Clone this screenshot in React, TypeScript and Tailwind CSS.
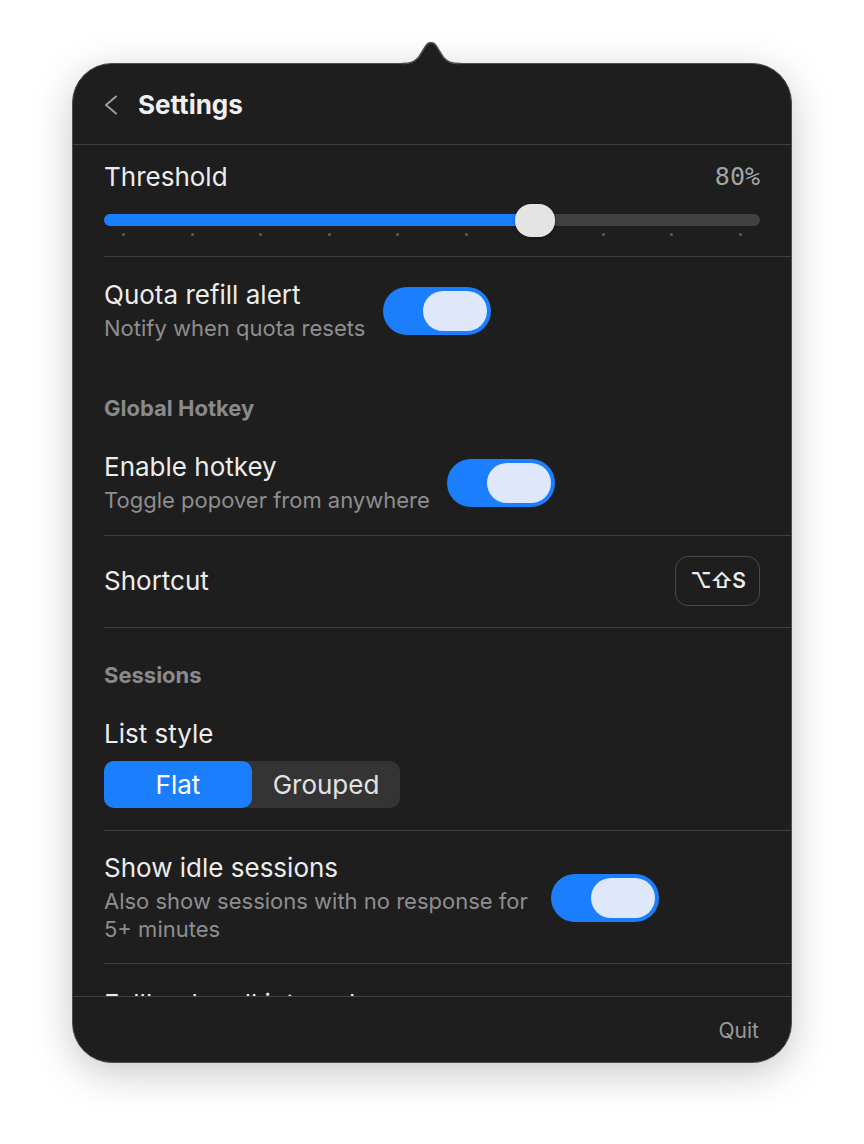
const ticks = Array.from({ length: 10 });

const Toggle = () => (
  <div className="w-[108px] h-[48px] shrink-0 rounded-full bg-[#1b7ffd] p-[4px] flex justify-end">
    <div className="w-[64px] h-[40px] rounded-full bg-[#dfe8fb]" />
  </div>
);

const Divider = () => <div className="h-px bg-[#414141]" />;

const ToggleRow = ({
  title,
  subtitle,
  gap = "gap-[18px]",
}: {
  title: string;
  subtitle: React.ReactNode;
  gap?: string;
}) => (
  <div className={`flex items-center ${gap} pr-[31px]`}>
    <div className="flex flex-col">
      <span className="text-[26px] leading-[30px] text-[#ececec] whitespace-nowrap">{title}</span>
      <span className="mt-1 text-[22px] leading-[28px] text-[#8e8e8e] whitespace-nowrap">{subtitle}</span>
    </div>
    <Toggle />
  </div>
);

const SectionHeader = ({ children }: { children: string }) => (
  <div className="text-[22px] leading-[28px] font-bold text-[#8a8a8a]">{children}</div>
);

export default function App() {
  return (
    <div className="min-h-[1144px] bg-white pt-[63px] font-['Inter',sans-serif]">
      <div className="relative mx-auto w-[720px] h-[1000px] rounded-[40px] border-[1.5px] border-[#4e4e4e] bg-[#1e1e1e] shadow-[0_10px_40px_rgba(0,0,0,0.22)] flex flex-col">
        {/* popover arrow */}
        <svg
          className="absolute top-[-22.5px] left-[328.5px]"
          width="58"
          height="27"
          viewBox="0 0 58 27"
        >
          <path
            d="M0 21.5 C9 21.5 12 20 16.5 15.5 L24 3.5 C26 0.8 27.5 0.5 29 0.5 C30.5 0.5 32 0.8 34 3.5 L41.5 15.5 C46 20 49 21.5 58 21.5 L58 27 L0 27 Z"
            fill="#1e1e1e"
          />
          <path
            d="M0 21.5 C9 21.5 12 20 16.5 15.5 L24 3.5 C26 0.8 27.5 0.5 29 0.5 C30.5 0.5 32 0.8 34 3.5 L41.5 15.5 C46 20 49 21.5 58 21.5"
            fill="none"
            stroke="#4e4e4e"
            strokeWidth="1.5"
          />
        </svg>

        {/* header */}
        <div className="h-[81px] shrink-0 border-b border-[#414141] flex items-center gap-[20px] pl-[31px]">
          <svg width="14" height="20" viewBox="0 0 14 20" className="mt-px">
            <path
              d="M12 1.5 L2 10 L12 18.5"
              fill="none"
              stroke="#9c9c9c"
              strokeWidth="2"
              strokeLinecap="round"
              strokeLinejoin="round"
            />
          </svg>
          <span className="text-[26px] font-bold text-[#f0f0f0]">Settings</span>
        </div>

        {/* scrolling content */}
        <div className="flex-1 overflow-hidden pl-[31px]">
          <div className="pt-[17px] pb-[16px] pr-[31px]">
            <div className="flex items-center justify-between">
              <span className="text-[26px] leading-[30px] text-[#ececec]">Threshold</span>
              <span className="font-['DejaVu_Sans_Mono',monospace] text-[25px] leading-[30px] text-[#a3a3a3]">
                80%
              </span>
            </div>
            <div className="relative mt-[4px] h-[44px]">
              <div className="absolute top-[18px] left-0 right-0 h-[12px] rounded-full bg-[#414141]" />
              <div className="absolute top-[18px] left-0 w-[431px] h-[12px] rounded-full bg-[#1b7ffd]" />
              <div className="absolute top-[37px] left-0 right-0 flex justify-between px-[18px]">
                {ticks.map((_, i) => (
                  <div key={i} className="w-[3px] h-[3px] rounded-full bg-[#5e5e5e]" />
                ))}
              </div>
              <div className="absolute top-[8px] left-[411px] w-[40px] h-[33px] rounded-[16px] bg-[#e4e4e4] shadow-[0_1px_3px_rgba(0,0,0,0.4)]" />
            </div>
          </div>
          <Divider />

          <div className="pt-[23px]">
            <ToggleRow title="Quota refill alert" subtitle="Notify when quota resets" />
          </div>

          <div className="mt-[52px]">
            <SectionHeader>Global Hotkey</SectionHeader>
          </div>
          <div className="mt-[30px] pb-[21px]">
            <ToggleRow title="Enable hotkey" subtitle="Toggle popover from anywhere" gap="gap-[17px]" />
          </div>
          <Divider />

          <div className="pt-[20px] pb-[21px] pr-[31px] flex items-center justify-between">
            <span className="text-[26px] leading-[30px] text-[#ececec]">Shortcut</span>
            <div className="w-[85px] h-[50px] rounded-[13px] border-[1.5px] border-[#4a4a4a] flex items-center justify-center">
              <span className="font-['Inter','DejaVu_Sans',sans-serif] text-[21px] font-semibold tracking-[-1px] text-[#ececec]">
                ⌥⇧S
              </span>
            </div>
          </div>
          <Divider />

          <div className="pt-[33px]">
            <SectionHeader>Sessions</SectionHeader>
          </div>
          <div className="mt-[30px] text-[26px] leading-[30px] text-[#ececec]">List style</div>
          <div className="mt-[12px] pb-[22px]">
            <div className="w-[296px] h-[47px] rounded-[10px] bg-[#343434] grid grid-cols-2">
              <div className="rounded-[10px] bg-[#1b7ffd] flex items-center justify-center text-[26px] text-white">
                Flat
              </div>
              <div className="flex items-center justify-center text-[26px] text-[#e2e2e2]">Grouped</div>
            </div>
          </div>
          <Divider />

          <div className="pt-[22px] pb-[20px]">
            <ToggleRow
              title="Show idle sessions"
              gap="gap-[23px]"
              subtitle={
                <>
                  Also show sessions with no response for
                  <br />
                  5+ minutes
                </>
              }
            />
          </div>
          <Divider />

          <div className="pt-[25px] text-[26px] leading-[30px] text-[#ececec]">Fallback poll interval</div>
        </div>

        {/* footer */}
        <div className="h-[66px] shrink-0 border-t border-[#414141] flex items-center justify-end pr-[32px] pt-[3px]">
          <span className="text-[21px] text-[#9a9a9a]">Quit</span>
        </div>
      </div>
    </div>
  );
}
